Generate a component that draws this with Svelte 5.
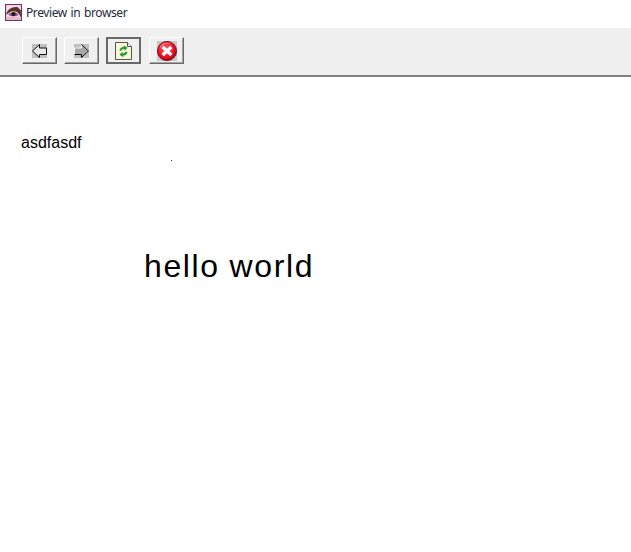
<script>
  const tools = ['back', 'forward', 'refresh', 'stop']
</script>

<div class="window">
  <header class="titlebar">
    <svg class="app-icon" width="17" height="17" viewBox="0 0 16 16">
      <rect x="0.5" y="0.5" width="15" height="15" fill="#f0dfe8" stroke="#7a2a78" />
      <path d="M1 10 C2 5 7 2 12 3 L15 6 V13 L13 9 C10 6 6 6 3 9 Z" fill="#5a3428" />
      <path d="M3 10 C6 7 10 7 13 10 C10 12 6 12 3 10 Z" fill="#8a5a88" />
      <circle cx="8" cy="9.5" r="2" fill="#1a1020" />
      <path d="M1 12 H15 V15 H1 Z" fill="#e0bcbc" />
    </svg>
    <span class="title">Preview in browser</span>
  </header>

  <nav class="toolbar">
    {#each tools as tool}
      <button class="tool tool--{tool}" aria-label={tool}>
        {#if tool === 'back'}
          <svg width="15" height="14" viewBox="0 0 15 14">
            <rect width="15" height="14" fill="#c0c0c0" />
            <path d="M0.5 7 L7.5 0.5 V4 H14.5 V10.5 H7.5 V13.5 Z" fill="#e8e8e8" stroke="#111" />
          </svg>
        {:else if tool === 'forward'}
          <svg width="15" height="14" viewBox="0 0 15 14">
            <rect width="15" height="14" fill="#c0c0c0" />
            <path d="M14.5 7 L7.5 0.5 V4 H0.5 V10.5 H7.5 V13.5 Z" fill="#a8a8a8" stroke="#f8f8f8" />
            <path d="M7.5 0.5 L14.5 7 L7.5 13.5 V10.5 H0.5" fill="none" stroke="#000" />
          </svg>
        {:else if tool === 'refresh'}
          <svg width="17" height="18" viewBox="0 0 17 18">
            <path d="M0.5 0.5 H12.5 L16.5 4.5 V17.5 H0.5 Z" fill="#f8f6d4" stroke="#555" />
            <path d="M12.5 0.5 V4.5 H16.5" fill="#fff" stroke="#555" />
            <path d="M4.5 8.5 C5 6 7 4.5 9 5.2 L8.5 3.2 L12.5 5.8 L9.5 8.8 L9.5 7.2 C8 6.8 7 7.5 6.5 8.8 Z" fill="#1f9a2e" />
            <path d="M12.5 10 C12 12.5 10 14 8 13.3 L8.5 15.3 L4.5 12.7 L7.5 9.7 L7.5 11.3 C9 11.7 10 11 10.5 9.7 Z" fill="#1f9a2e" />
          </svg>
        {:else}
          <svg width="20" height="20" viewBox="0 0 20 20">
            <defs>
              <radialGradient id="stop-fill" cx="45%" cy="40%" r="62%">
                <stop offset="0%" stop-color="#ff6a70" />
                <stop offset="60%" stop-color="#f01828" />
                <stop offset="100%" stop-color="#a80010" />
              </radialGradient>
            </defs>
            <rect width="20" height="20" fill="#c8c8c8" />
            <circle cx="10" cy="10" r="9.6" fill="url(#stop-fill)" stroke="#700010" stroke-width="0.8" />
            <path d="M2.5 8 A8 7.5 0 0 1 15 3 A10 10 0 0 0 2.5 8 Z" fill="#ffb0b0" />
            <path d="M5.6 6 L14.4 14 M14.4 6 L5.6 14" stroke="#fff" stroke-width="3.2" />
          </svg>
        {/if}
      </button>
    {/each}
  </nav>

  <main class="page">
    <p class="small">asdfasdf</p>
    <span class="dot"></span>
    <p class="big">hello world</p>
  </main>
</div>

<style>
  :global(body) {
    background: #fff;
  }

  .window {
    height: 552px;
    display: flex;
    flex-direction: column;
    overflow: hidden;
    background: #fff;
    font-family: "Liberation Sans", Arial, sans-serif;
  }

  .titlebar {
    height: 28px;
    display: flex;
    align-items: center;
    gap: 4px;
    padding: 0 0 3px 5px;
    box-sizing: border-box;
  }

  .title {
    font-family: "Noto Sans", sans-serif;
    font-size: 12px;
    color: #1c2a3a;
    letter-spacing: -0.4px;
    word-spacing: 1px;
  }

  .toolbar {
    height: 49px;
    box-sizing: border-box;
    display: flex;
    align-items: center;
    gap: 7px;
    padding: 0 0 2px 22px;
    background: #f0f0f0;
    border-bottom: 2px solid #808080;
  }

  .tool {
    width: 35px;
    height: 27px;
    padding: 0;
    display: flex;
    align-items: center;
    justify-content: center;
    background: #f0f0f0;
    border: 1px solid;
    border-color: #fff #696969 #696969 #fff;
    box-shadow: inset -1px -1px 0 #a0a0a0;
  }

  .tool--refresh {
    border: 2px solid #696969;
    box-shadow: none;
  }

  .tool--stop {
    margin-left: 1px;
  }

  .page {
    flex: 1;
    padding: 57px 0 0 21px;
  }

  .small {
    margin: 0;
    font-size: 16px;
    line-height: 18px;
    color: #000;
  }

  .dot {
    display: block;
    width: 1px;
    height: 1px;
    margin: 8px 0 0 150px;
    background: #333;
  }

  .big {
    margin: 87px 0 0 123px;
    font-size: 32px;
    line-height: 37px;
    letter-spacing: 1.6px;
    word-spacing: -0.5px;
    color: #000;
  }
</style>
